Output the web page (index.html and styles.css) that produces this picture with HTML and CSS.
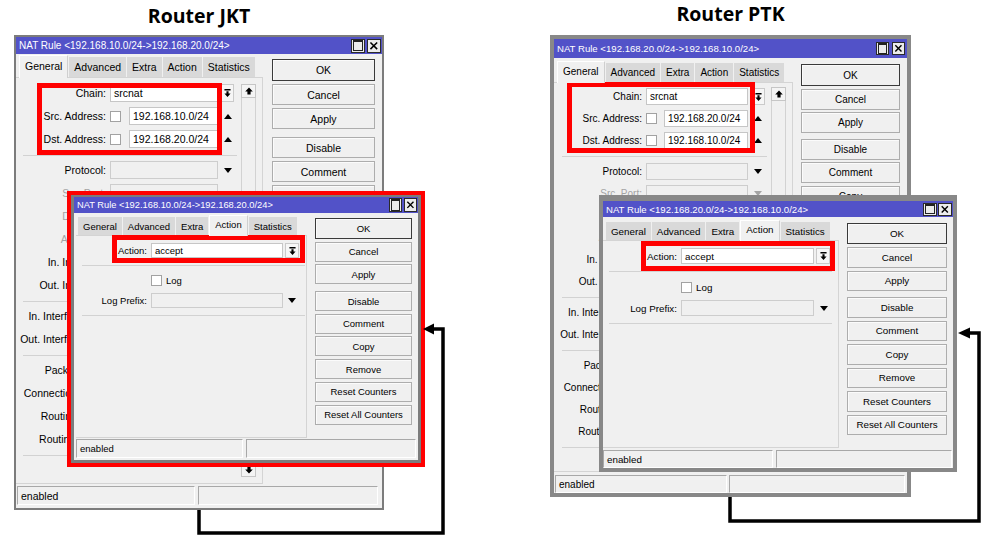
FILE: index.html
```html
<!DOCTYPE html>
<html lang="en">
<head>
    <meta charset="UTF-8">
    <title>NAT Rule JKT / PTK</title>
    <link rel="stylesheet" href="styles.css">
</head>
<body>
<div class="scene">

    <!-- Router JKT -->
    <div class="panel panel-jkt">
        <h2 class="heading">Router JKT</h2>

        <div class="win win-a">
            <div class="titlebar">
                <span>NAT Rule &lt;192.168.10.0/24-&gt;192.168.20.0/24&gt;</span>
                <span class="tb-btns"><span class="tb-btn tb-max"></span><span class="tb-btn"><svg viewBox="0 0 10 10"><path d="M1.5 1.5l7 7M8.5 1.5l-7 7"/></svg></span></span>
            </div>
            <div class="win-main">
                <div class="win-left">
                    <div class="tabs"><span class="tab on">General</span><span class="tab">Advanced</span><span class="tab">Extra</span><span class="tab">Action</span><span class="tab">Statistics</span></div>
                    <div class="pane">
                        <div class="form">
                            <div class="row"><span class="lbl">Chain:</span><span class="inp">srcnat</span><span class="dd"><svg viewBox="0 0 8 9"><path d="M0.5 0h7v1.6h-7zM2.8 2.6h2.4v2.4h2.3l-3.5 4-3.5-4h2.3z"/></svg></span></div>
                            <div class="row"><span class="lbl">Src. Address:</span><span class="chk"></span><span class="inp addr">192.168.10.0/24</span><span class="tri up"></span></div>
                            <div class="row"><span class="lbl">Dst. Address:</span><span class="chk"></span><span class="inp addr">192.168.20.0/24</span><span class="tri up"></span></div>
                            <div class="sep"></div>
                            <div class="row"><span class="lbl">Protocol:</span><span class="inp off"></span><span class="tri down"></span></div>
                            <div class="row dim"><span class="lbl">Src. Port:</span><span class="inp off"></span><span class="tri down"></span></div>
                            <div class="row dim"><span class="lbl">Dst. Port:</span><span class="inp off"></span><span class="tri down"></span></div>
                            <div class="row dim"><span class="lbl">Any. Port:</span><span class="inp off"></span><span class="tri down"></span></div>
                            <div class="row"><span class="lbl">In. Interface:</span><span class="inp off"></span><span class="tri down"></span></div>
                            <div class="row"><span class="lbl">Out. Interface:</span><span class="inp off"></span><span class="tri down"></span></div>
                            <div class="sep"></div>
                            <div class="row"><span class="lbl">In. Interface List:</span><span class="inp off"></span><span class="tri down"></span></div>
                            <div class="row"><span class="lbl">Out. Interface List:</span><span class="inp off"></span><span class="tri down"></span></div>
                            <div class="sep"></div>
                            <div class="row"><span class="lbl">Packet Mark:</span><span class="inp off"></span><span class="tri down"></span></div>
                            <div class="row"><span class="lbl">Connection Mark:</span><span class="inp off"></span><span class="tri down"></span></div>
                            <div class="row"><span class="lbl">Routing Mark:</span><span class="inp off"></span><span class="tri down"></span></div>
                            <div class="row"><span class="lbl">Routing Table:</span><span class="inp off"></span><span class="tri down"></span></div>
                            <div class="sep"></div>
                        </div>
                        <div class="scroll">
                            <span class="sb-btn"><svg viewBox="0 0 8 8"><path d="M4 0.5l3.8 4h-2.2v3h-3.2v-3h-2.2z"/></svg></span>
                            <span class="sb-btn"><svg viewBox="0 0 8 8"><path d="M4 7.5l3.8-4h-2.2v-3h-3.2v3h-2.2z"/></svg></span>
                        </div>
                        <div class="hl"></div>
                    </div>
                </div>
                <div class="btns">
                    <span class="btn def">OK</span>
                    <span class="btn">Cancel</span>
                    <span class="btn">Apply</span>
                    <span class="btn gap">Disable</span>
                    <span class="btn">Comment</span>
                    <span class="btn">Copy</span>
                    <span class="btn">Remove</span>
                    <span class="btn">Reset Counters</span>
                    <span class="btn">Reset All Counters</span>
                </div>
            </div>
            <div class="status"><span class="cell c1">enabled</span><span class="cell c2"></span></div>
        </div>

        <div class="win win-b">
            <div class="titlebar">
                <span>NAT Rule &lt;192.168.10.0/24-&gt;192.168.20.0/24&gt;</span>
                <span class="tb-btns"><span class="tb-btn tb-max"></span><span class="tb-btn"><svg viewBox="0 0 10 10"><path d="M1.5 1.5l7 7M8.5 1.5l-7 7"/></svg></span></span>
            </div>
            <div class="win-main">
                <div class="win-left">
                    <div class="tabs"><span class="tab">General</span><span class="tab">Advanced</span><span class="tab">Extra</span><span class="tab on">Action</span><span class="tab">Statistics</span></div>
                    <div class="pane">
                        <div class="form">
                            <div class="row"><span class="lbl">Action:</span><span class="inp">accept</span><span class="dd"><svg viewBox="0 0 8 9"><path d="M0.5 0h7v1.6h-7zM2.8 2.6h2.4v2.4h2.3l-3.5 4-3.5-4h2.3z"/></svg></span></div>
                            <div class="sep"></div>
                            <div class="row"><span class="lbl"></span><span class="chk"></span><span>Log</span></div>
                            <div class="row"><span class="lbl">Log Prefix:</span><span class="inp off"></span><span class="tri down"></span></div>
                            <div class="sep"></div>
                        </div>
                        <div class="hl"></div>
                    </div>
                </div>
                <div class="btns">
                    <span class="btn def">OK</span>
                    <span class="btn">Cancel</span>
                    <span class="btn">Apply</span>
                    <span class="btn gap">Disable</span>
                    <span class="btn">Comment</span>
                    <span class="btn">Copy</span>
                    <span class="btn">Remove</span>
                    <span class="btn">Reset Counters</span>
                    <span class="btn">Reset All Counters</span>
                </div>
            </div>
            <div class="status"><span class="cell c1">enabled</span><span class="cell c2"></span></div>
        </div>
    </div>

    <!-- Router PTK -->
    <div class="panel panel-ptk">
        <h2 class="heading">Router PTK</h2>

        <div class="win win-c">
            <div class="titlebar">
                <span>NAT Rule &lt;192.168.20.0/24-&gt;192.168.10.0/24&gt;</span>
                <span class="tb-btns"><span class="tb-btn tb-max"></span><span class="tb-btn"><svg viewBox="0 0 10 10"><path d="M1.5 1.5l7 7M8.5 1.5l-7 7"/></svg></span></span>
            </div>
            <div class="win-main">
                <div class="win-left">
                    <div class="tabs"><span class="tab on">General</span><span class="tab">Advanced</span><span class="tab">Extra</span><span class="tab">Action</span><span class="tab">Statistics</span></div>
                    <div class="pane">
                        <div class="form">
                            <div class="row"><span class="lbl">Chain:</span><span class="inp">srcnat</span><span class="dd"><svg viewBox="0 0 8 9"><path d="M0.5 0h7v1.6h-7zM2.8 2.6h2.4v2.4h2.3l-3.5 4-3.5-4h2.3z"/></svg></span></div>
                            <div class="row"><span class="lbl">Src. Address:</span><span class="chk"></span><span class="inp addr">192.168.20.0/24</span><span class="tri up"></span></div>
                            <div class="row"><span class="lbl">Dst. Address:</span><span class="chk"></span><span class="inp addr">192.168.10.0/24</span><span class="tri up"></span></div>
                            <div class="sep"></div>
                            <div class="row"><span class="lbl">Protocol:</span><span class="inp off"></span><span class="tri down"></span></div>
                            <div class="row dim"><span class="lbl">Src. Port:</span><span class="inp off"></span><span class="tri down"></span></div>
                            <div class="row dim"><span class="lbl">Dst. Port:</span><span class="inp off"></span><span class="tri down"></span></div>
                            <div class="row dim"><span class="lbl">Any. Port:</span><span class="inp off"></span><span class="tri down"></span></div>
                            <div class="row"><span class="lbl">In. Interface:</span><span class="inp off"></span><span class="tri down"></span></div>
                            <div class="row"><span class="lbl">Out. Interface:</span><span class="inp off"></span><span class="tri down"></span></div>
                            <div class="sep"></div>
                            <div class="row"><span class="lbl">In. Interface List:</span><span class="inp off"></span><span class="tri down"></span></div>
                            <div class="row"><span class="lbl">Out. Interface List:</span><span class="inp off"></span><span class="tri down"></span></div>
                            <div class="sep"></div>
                            <div class="row"><span class="lbl">Packet Mark:</span><span class="inp off"></span><span class="tri down"></span></div>
                            <div class="row"><span class="lbl">Connection Mark:</span><span class="inp off"></span><span class="tri down"></span></div>
                            <div class="row"><span class="lbl">Routing Mark:</span><span class="inp off"></span><span class="tri down"></span></div>
                            <div class="row"><span class="lbl">Routing Table:</span><span class="inp off"></span><span class="tri down"></span></div>
                            <div class="sep"></div>
                        </div>
                        <div class="scroll">
                            <span class="sb-btn"><svg viewBox="0 0 8 8"><path d="M4 0.5l3.8 4h-2.2v3h-3.2v-3h-2.2z"/></svg></span>
                            <span class="sb-btn"><svg viewBox="0 0 8 8"><path d="M4 7.5l3.8-4h-2.2v-3h-3.2v3h-2.2z"/></svg></span>
                        </div>
                        <div class="hl"></div>
                    </div>
                </div>
                <div class="btns">
                    <span class="btn def">OK</span>
                    <span class="btn">Cancel</span>
                    <span class="btn">Apply</span>
                    <span class="btn gap">Disable</span>
                    <span class="btn">Comment</span>
                    <span class="btn">Copy</span>
                    <span class="btn">Remove</span>
                    <span class="btn">Reset Counters</span>
                    <span class="btn">Reset All Counters</span>
                </div>
            </div>
            <div class="status"><span class="cell c1">enabled</span><span class="cell c2"></span></div>
        </div>

        <div class="win win-d">
            <div class="titlebar">
                <span>NAT Rule &lt;192.168.20.0/24-&gt;192.168.10.0/24&gt;</span>
                <span class="tb-btns"><span class="tb-btn tb-max"></span><span class="tb-btn"><svg viewBox="0 0 10 10"><path d="M1.5 1.5l7 7M8.5 1.5l-7 7"/></svg></span></span>
            </div>
            <div class="win-main">
                <div class="win-left">
                    <div class="tabs"><span class="tab">General</span><span class="tab">Advanced</span><span class="tab">Extra</span><span class="tab on">Action</span><span class="tab">Statistics</span></div>
                    <div class="pane">
                        <div class="form">
                            <div class="row"><span class="lbl">Action:</span><span class="inp">accept</span><span class="dd"><svg viewBox="0 0 8 9"><path d="M0.5 0h7v1.6h-7zM2.8 2.6h2.4v2.4h2.3l-3.5 4-3.5-4h2.3z"/></svg></span></div>
                            <div class="sep"></div>
                            <div class="row"><span class="lbl"></span><span class="chk"></span><span>Log</span></div>
                            <div class="row"><span class="lbl">Log Prefix:</span><span class="inp off"></span><span class="tri down"></span></div>
                            <div class="sep"></div>
                        </div>
                        <div class="hl"></div>
                    </div>
                </div>
                <div class="btns">
                    <span class="btn def">OK</span>
                    <span class="btn">Cancel</span>
                    <span class="btn">Apply</span>
                    <span class="btn gap">Disable</span>
                    <span class="btn">Comment</span>
                    <span class="btn">Copy</span>
                    <span class="btn">Remove</span>
                    <span class="btn">Reset Counters</span>
                    <span class="btn">Reset All Counters</span>
                </div>
            </div>
            <div class="status"><span class="cell c1">enabled</span><span class="cell c2"></span></div>
        </div>
    </div>

    <!-- connector arrows drawn over both panels -->
    <svg class="arrows" viewBox="0 0 998 541" width="998" height="541">
        <path class="line" d="M199 510V533H443V329H432"/>
        <path d="M423 329L434 323.5V334.5Z"/>
        <path class="line" d="M730 497V521H979V333H969"/>
        <path d="M958 333L970 327.5V338.5Z"/>
    </svg>
</div>
</body>
</html>
```

FILE: styles.css
```css
/* General styles */
* {
    box-sizing: border-box;
}

body {
    margin: 0;
    background: #ffffff;
    font-family: "Liberation Sans", Arial, sans-serif;
    color: #000000;
}

.scene {
    position: relative;
    width: 998px;
    height: 541px;
    display: flex;
    overflow: hidden;
}

.panel {
    position: relative;
}
.panel-jkt {
    width: 540px;
    padding: 2px 0 0 14px;
}
.panel-ptk {
    flex: 1;
    padding: 0 0 0 10px;
}

.heading {
    margin: 0;
    font-family: "Open Sans", sans-serif;
    font-weight: 700;
    font-size: 19.5px;
    line-height: 27px;
    text-align: center;
}
.panel-jkt .heading { width: 370px; }
.panel-ptk .heading { width: 361px; }

/* Winbox window */
.win {
    display: flex;
    flex-direction: column;
    background: #f0f0f0;
    border-style: solid;
    border-color: #7c7c7c;
    font-size: var(--fs);
}

.titlebar {
    height: var(--tb-h);
    display: flex;
    align-items: center;
    justify-content: space-between;
    padding: 0 var(--tb-pr) 0 3px;
    background: #5252c8;
    color: #ffffff;
    font-size: var(--tfs);
    white-space: nowrap;
}
.tb-btns {
    display: flex;
    gap: var(--tb-gap);
}
.tb-btn {
    width: var(--tbw);
    height: var(--tbh);
    display: flex;
    align-items: center;
    justify-content: center;
    background: #ececec;
    border: 1px solid #2a2a2a;
}
.tb-btn svg {
    width: 80%;
    height: 80%;
    stroke: #000000;
    stroke-width: 1.6;
}
.tb-max::before {
    content: '';
    width: 70%;
    height: 70%;
    border: 1px solid #222222;
    border-top-width: 2px;
}

.win-main {
    display: flex;
    height: var(--main-h);
}
.win-left {
    width: var(--left-w);
    margin-left: var(--left-ml);
    display: flex;
    flex-direction: column;
}

.tabs {
    height: var(--tabs-h);
    display: flex;
    align-items: flex-end;
    gap: 1px;
    padding-left: var(--tabs-pl);
}
.tab {
    height: var(--tab-h);
    padding: 0 5px;
    display: flex;
    align-items: center;
    background: #d9d9d9;
    white-space: nowrap;
}
.tab.on {
    height: calc(var(--tab-h) + 3px);
    margin-bottom: -1px;
    padding-bottom: 3px;
    position: relative;
    z-index: 1;
    background: #f0f0f0;
    border: 1px solid #ffffff;
    border-right-color: #cfcfcf;
    border-bottom: 0;
}

.pane {
    flex: 1;
    position: relative;
    display: flex;
    border: 1px solid #d4d4d4;
    border-left: 0;
}
.form {
    flex: 1;
    min-width: 0;
    display: flex;
    flex-direction: column;
    gap: 5px;
    padding-top: var(--pane-pt);
    overflow: hidden;
}

.row {
    height: var(--row-h);
    flex-shrink: 0;
    display: flex;
    align-items: center;
}
.lbl {
    width: var(--lbl-w);
    margin-right: 4px;
    flex-shrink: 0;
    text-align: right;
    white-space: nowrap;
}
.row.dim .lbl {
    color: #a4a4a4;
}

.inp {
    width: var(--inp-w);
    height: 100%;
    flex-shrink: 0;
    display: flex;
    align-items: center;
    padding-left: 3px;
    background: #ffffff;
    border: 1px solid #c6c6c6;
    white-space: nowrap;
    overflow: hidden;
}
.inp.addr {
    width: var(--addr-w);
}
.inp.off {
    background: #f0f0f0;
    border-color: #cdcdcd;
}
.chk {
    width: 11px;
    height: 11px;
    flex-shrink: 0;
    margin-right: var(--chk-mr);
    background: #ffffff;
    border: 1px solid #a2a2a2;
}
.dd {
    width: 14px;
    height: 100%;
    margin-left: var(--dd-ml);
    display: flex;
    align-items: center;
    justify-content: center;
    background: #f6f6f6;
    border: 1px solid #cacaca;
}
.dd svg {
    width: 7px;
    height: 8px;
}

.tri {
    width: 0;
    height: 0;
    margin-left: var(--tri-ml);
    border-left: 4px solid transparent;
    border-right: 4px solid transparent;
}
.tri.up { border-bottom: 5px solid #000000; }
.tri.down { border-top: 5px solid #000000; }
.row.dim .tri.down { border-top-color: #a4a4a4; }

.sep {
    height: 1px;
    flex-shrink: 0;
    margin: var(--sep-mt) var(--sep-mr) var(--sep-mb) var(--sep-ml);
    background: #d2d2d2;
}

.scroll {
    width: 15px;
    margin: var(--sb-mt) 6px 6px 0;
    display: flex;
    flex-direction: column;
    justify-content: space-between;
    border: 1px solid #d2d2d2;
}
.sb-btn {
    height: 14px;
    margin: -1px;
    display: flex;
    align-items: center;
    justify-content: center;
    background: #f4f4f4;
    border: 1px solid #c6c6c6;
}
.sb-btn svg {
    width: 8px;
    height: 8px;
}

/* red highlight drawn over the fields */
.hl {
    position: absolute;
    left: var(--hl-x);
    top: var(--hl-y);
    width: var(--hl-w);
    height: var(--hl-h);
    border: 5px solid #ff0000;
}

.btns {
    width: var(--btn-w);
    margin-left: var(--btn-ml);
    padding-top: var(--btn-pt);
    display: flex;
    flex-direction: column;
    gap: var(--btn-gap);
}
.btn {
    height: var(--btn-h);
    flex-shrink: 0;
    display: flex;
    align-items: center;
    justify-content: center;
    background: #f0f0f0;
    border: 1px solid #adadad;
    box-shadow: inset 1px 1px 0 #fbfbfb;
    white-space: nowrap;
}
.btn.def {
    height: var(--ok-h);
    border-color: #3a3a3a;
}
.btn.gap {
    margin-top: var(--btn-extra);
}

.status {
    height: var(--st-h);
    margin-top: var(--st-mt);
    padding-left: var(--st-pl);
    display: flex;
    gap: var(--st-gap);
}
.cell {
    display: flex;
    align-items: center;
    padding-left: 3px;
    border: 1px solid;
    border-color: #a8a8a8 #ffffff #ffffff #a8a8a8;
}
.c1 { width: var(--c1); }
.c2 { width: var(--c2); }

/* JKT, General tab (back) */
.win-a {
    width: 370px;
    height: 475px;
    margin-top: 6px;
    border-width: 2px;
    --fs: 10.5px; --tfs: 10px; --tb-h: 17px; --tbw: 14px; --tbh: 14px; --tb-gap: 2px; --tb-pr: 1px;
    --main-h: 430px; --left-ml: 0px; --left-w: 247px;
    --tabs-h: 23px; --tab-h: 20px; --tabs-pl: 3px;
    --pane-pt: 6px; --row-h: 18px; --lbl-w: 90px; --inp-w: 108px; --addr-w: 89px;
    --chk-mr: 8px; --dd-ml: 2px; --tri-ml: 6px;
    --sep-mt: 2px; --sep-mb: 0px; --sep-ml: 7px; --sep-mr: 4px; --sb-mt: 6px;
    --hl-x: 21px; --hl-y: 5px; --hl-w: 185px; --hl-h: 72px;
    --btn-ml: 9px; --btn-w: 103px; --btn-pt: 5px; --btn-h: 21px; --ok-h: 22px; --btn-gap: 3px; --btn-extra: 5px;
    --st-mt: 2px; --st-h: 19px; --st-pl: 1px; --st-gap: 3px; --c1: 178px; --c2: 180px;
}

/* JKT, Action tab (front) */
.win-b {
    position: absolute;
    left: 71px;
    top: 195px;
    width: 350px;
    height: 268px;
    border-width: 2px 3px 3px;
    outline: 4px solid #ff0000;
    --fs: 9.5px; --tfs: 9.3px; --tb-h: 16px; --tbw: 13px; --tbh: 14px; --tb-gap: 2px; --tb-pr: 1px;
    --main-h: 225px; --left-ml: 2px; --left-w: 231px;
    --tabs-h: 22px; --tab-h: 18px; --tabs-pl: 2px;
    --pane-pt: 7px; --row-h: 15px; --lbl-w: 71px; --inp-w: 132px; --addr-w: 132px;
    --chk-mr: 4px; --dd-ml: 2px; --tri-ml: 5px;
    --sep-mt: 2px; --sep-mb: 2px; --sep-ml: 6px; --sep-mr: 1px;
    --hl-x: 36px; --hl-y: -1px; --hl-w: 193px; --hl-h: 28px;
    --btn-ml: 8px; --btn-w: 97px; --btn-pt: 5px; --btn-h: 20px; --ok-h: 21px; --btn-gap: 2.7px; --btn-extra: 4px;
    --st-mt: 1px; --st-h: 19px; --st-pl: 2px; --st-gap: 3px; --c1: 167px; --c2: 170px;
}

/* PTK, General tab (back) */
.win-c {
    width: 361px;
    height: 462px;
    margin-top: 8px;
    border-width: 4px;
    border-color: #888888;
    --fs: 10px; --tfs: 9.6px; --tb-h: 19px; --tbw: 13px; --tbh: 13px; --tb-gap: 3px; --tb-pr: 2px;
    --main-h: 414px; --left-ml: 0px; --left-w: 239px;
    --tabs-h: 24px; --tab-h: 19px; --tabs-pl: 3px;
    --pane-pt: 5px; --row-h: 17px; --lbl-w: 88px; --inp-w: 102px; --addr-w: 84px;
    --chk-mr: 7px; --dd-ml: 3px; --tri-ml: 6px;
    --sep-mt: 2px; --sep-mb: 1px; --sep-ml: 8px; --sep-mr: 4px; --sb-mt: 4px;
    --hl-x: 13px; --hl-y: -1px; --hl-w: 188px; --hl-h: 71px;
    --btn-ml: 8px; --btn-w: 99px; --btn-pt: 6px; --btn-h: 21px; --ok-h: 22px; --btn-gap: 2.5px; --btn-extra: 3px;
    --st-mt: 3px; --st-h: 18px; --st-pl: 1px; --st-gap: 2px; --c1: 172px; --c2: 176px;
}

/* PTK, Action tab (front) */
.win-d {
    position: absolute;
    left: 59px;
    top: 195px;
    width: 358px;
    height: 277px;
    border-width: 6px 4px 4px;
    border-color: #888888;
    --fs: 9.8px; --tfs: 9.6px; --tb-h: 16px; --tbw: 14px; --tbh: 13px; --tb-gap: 1px; --tb-pr: 1px;
    --main-h: 231px; --left-ml: 0px; --left-w: 236px;
    --tabs-h: 23px; --tab-h: 18px; --tabs-pl: 3px;
    --pane-pt: 7px; --row-h: 16px; --lbl-w: 74px; --inp-w: 133px; --addr-w: 133px;
    --chk-mr: 4px; --dd-ml: 2px; --tri-ml: 6px;
    --sep-mt: 2px; --sep-mb: 2px; --sep-ml: 6px; --sep-mr: 6px;
    --hl-x: 38px; --hl-y: 0px; --hl-w: 194px; --hl-h: 30px;
    --btn-ml: 8px; --btn-w: 100px; --btn-pt: 6px; --btn-h: 20.5px; --ok-h: 21px; --btn-gap: 3px; --btn-extra: 3px;
    --st-mt: 2px; --st-h: 18px; --st-pl: 0px; --st-gap: 3px; --c1: 170px; --c2: 176px;
}

/* connector arrows */
.arrows {
    position: absolute;
    left: 0;
    top: 0;
    pointer-events: none;
}
.arrows path {
    fill: #000000;
}
.arrows .line {
    fill: none;
    stroke: #000000;
    stroke-width: 3.5;
}
```
